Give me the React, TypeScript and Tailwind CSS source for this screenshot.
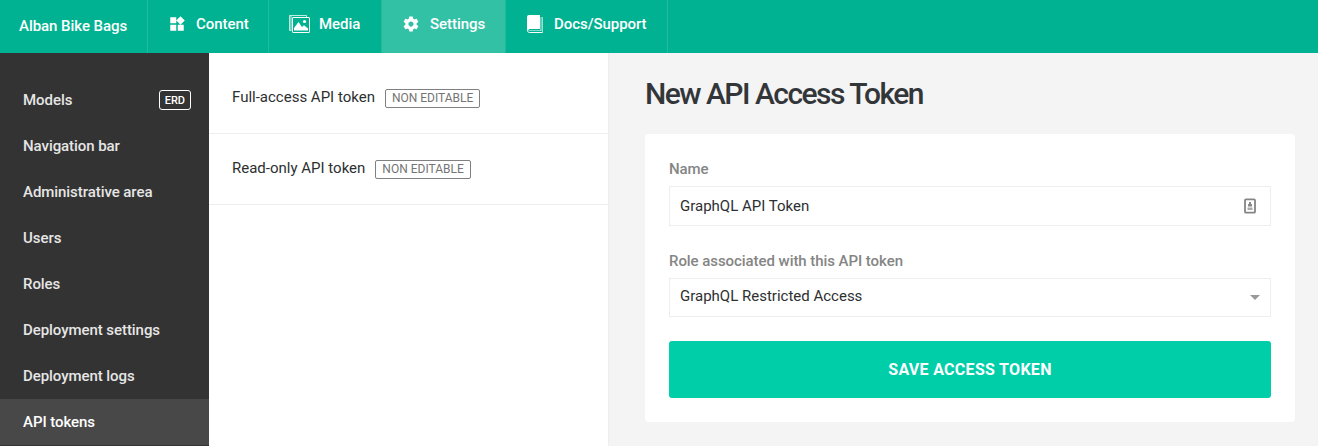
import type { ReactNode } from "react";

const WidgetsIcon = () => (
  <svg className="block size-[18px]" viewBox="0 0 24 24" fill="currentColor">
    <path d="M13 13v8h8v-8h-8zM3 21h8v-8H3v8zM3 3v8h8V3H3zm13.66-1.31L11 7.34 16.66 13l5.66-5.66-5.66-5.65z" />
  </svg>
);

const MediaIcon = () => (
  <svg className="block h-[18px] w-[21px]" viewBox="0 0 21 18" fill="none">
    <path d="M2.500 15.500h-2V.5h17v2" stroke="currentColor" strokeOpacity=".75" />
    <path d="M1 1h2v14H1z" fill="currentColor" fillOpacity=".4" />
    <rect x="3.500" y="2.500" width="17" height="15" rx=".5" stroke="currentColor" />
    <path d="M5 15.500V13l4.500-6 3.500 5 2-1.800 4 3.300v2H5z" fill="currentColor" />
    <circle cx="15.500" cy="6.500" r="1.600" fill="currentColor" />
  </svg>
);

const GearIcon = () => (
  <svg className="block size-[18px]" viewBox="0 0 24 24" fill="currentColor">
    <path d="M19.430 12.980c.04-.32.07-.64.07-.98s-.03-.66-.07-.98l2.110-1.650c.19-.15.24-.42.12-.64l-2-3.460c-.12-.22-.39-.3-.61-.22l-2.490 1c-.52-.4-1.080-.73-1.690-.98l-.38-2.650A.488.488 0 0 0 14 2h-4c-.25 0-.46.18-.49.42l-.38 2.650c-.61.25-1.170.59-1.690.98l-2.490-1c-.23-.09-.49 0-.61.22l-2 3.460c-.13.22-.07.49.12.64l2.110 1.650c-.04.32-.07.65-.07.98s.03.66.07.98l-2.110 1.650c-.19.15-.24.42-.12.64l2 3.460c.12.22.39.3.61.22l2.490-1c.52.4 1.080.73 1.690.98l.38 2.650c.03.24.24.42.49.42h4c.25 0 .46-.18.49-.42l.38-2.650c.61-.25 1.170-.59 1.690-.98l2.490 1c.23.09.49 0 .61-.22l2-3.460c.12-.22.07-.49-.12-.64l-2.110-1.650zM12 15.500c-1.930 0-3.500-1.570-3.500-3.500s1.570-3.500 3.500-3.500 3.500 1.570 3.500 3.500-1.570 3.500-3.500 3.500z" />
  </svg>
);

const BookIcon = () => (
  <svg className="block h-[18px] w-4" viewBox="0 0 16 18" fill="none">
    <path d="M2 0h11v14H2.500L0 16V2a2 2 0 0 1 2-2z" fill="currentColor" />
    <path d="M.5 15.500c0 1.200.8 2 2 2h13" stroke="currentColor" />
    <path d="M1.500 15.500H14" stroke="currentColor" strokeOpacity=".5" />
    <path d="M13 2h2v14h-2z" fill="currentColor" fillOpacity=".35" />
    <path d="M15.500 2v15.500" stroke="currentColor" strokeOpacity=".6" />
  </svg>
);

const ContactIcon = () => (
  <svg className="block h-4 w-3" viewBox="0 0 12 16" fill="none">
    <rect x="1" y="1.300" width="10" height="13.400" rx="1" stroke="#858585" strokeWidth="1.800" />
    <path d="M5 4h2v2h1v2.500H4V6h1z" fill="#888" />
    <path d="M3.500 9.500h5v2.500h-5z" fill="#aaa" />
  </svg>
);

type TabProps = { icon: ReactNode; label: string; className: string; labelClass: string; active?: boolean };

const Tab = ({ icon, label, className, labelClass, active }: TabProps) => (
  <a className={`flex h-full items-center border-r border-[#20bb9c] pb-[5px] ${active ? "bg-[#33c1a6]" : ""} ${className}`}>
    {icon}
    <span className={labelClass}>{label}</span>
  </a>
);

const menu = ["Models", "Navigation bar", "Administrative area", "Users", "Roles", "Deployment settings", "Deployment logs", "API tokens"];

const TokenRow = ({ name }: { name: string }) => (
  <div className="flex h-[71px] items-center gap-2.5 border-b border-[#eee] pl-[23px]">
    <span className="pb-0.5">{name}</span>
    <span className="flex h-[19px] items-center rounded-[2px] border border-[#808080] px-1.5 text-[12px] leading-none text-[#747474]">NON EDITABLE</span>
  </div>
);

export default function App() {
  return (
    <div className="flex h-[446px] w-[1318px] flex-col overflow-hidden bg-[#f4f4f4] font-['Roboto',sans-serif] text-[15px] leading-5 text-[#2d2f31]">
      <header className="flex h-[53px] shrink-0 bg-[#00b291] font-medium tracking-[-0.05px] text-white">
        <div className="flex w-[148px] items-center border-r border-[#20bb9c] pb-px pl-[19px]">Alban Bike Bags</div>
        <Tab icon={<WidgetsIcon />} label="Content" className="w-[121px] pl-5" labelClass="ml-[10px]" />
        <Tab icon={<MediaIcon />} label="Media" className="w-[113px] pl-5" labelClass="ml-[9px]" />
        <Tab icon={<GearIcon />} label="Settings" className="w-[124px] pl-5" labelClass="ml-[10px]" active />
        <Tab icon={<BookIcon />} label="Docs/Support" className="w-[162px] pl-[21px]" labelClass="ml-[11px]" />
      </header>
      <div className="flex min-h-0 flex-1">
        <nav className="w-[209px] shrink-0 bg-[#333] pt-6 font-medium tracking-[-0.06px] text-[#e6e6e6]">
          {menu.map((item) => (
            <a key={item} className={`flex h-[46px] items-center justify-between pl-[23px] pr-[18px] ${item === "API tokens" ? "bg-[#484848] text-white" : ""}`}>
              {item}
              {item === "Models" && (
                <span className="flex h-5 items-center rounded-[3px] border border-white px-[5px] text-[11px] leading-none tracking-normal text-white">ERD</span>
              )}
            </a>
          ))}
        </nav>
        <section className="w-[400px] shrink-0 border-r border-[#eee] bg-white pt-[10px]">
          <TokenRow name="Full-access API token" />
          <TokenRow name="Read-only API token" />
        </section>
        <main className="flex-1 pl-9 pr-[23px] pt-5">
          <h1 className="h-[61px] text-[30px] font-medium leading-[42px] tracking-[-1.52px] text-[#333639]">New API Access Token</h1>
          <form className="flex h-72 flex-col rounded-[4px] bg-white px-6 pt-[25px]">
            <label className="h-[27px] font-medium tracking-[-0.06px] text-[#858585]">Name</label>
            <div className="flex h-10 items-center justify-between border border-[#eee] pl-2.5 pr-[14px]">
              <span>GraphQL API Token</span>
              <ContactIcon />
            </div>
            <label className="mt-[25px] h-[27px] font-medium tracking-[-0.06px] text-[#858585]">Role associated with this API token</label>
            <div className="flex h-[39px] items-center justify-between border border-[#eee] pl-2.5 pr-2.5">
              <span className="pb-[3px]">GraphQL Restricted Access</span>
              <svg className="block h-[5px] w-[10px]" viewBox="0 0 10 5" fill="#999"><path d="M0 0h10L5 5z" /></svg>
            </div>
            <button type="button" className="mt-6 h-[57px] rounded-[3px] bg-[#00cea9] text-[16px] font-bold tracking-[0.3px] text-white">SAVE ACCESS TOKEN</button>
          </form>
        </main>
      </div>
    </div>
  );
}
